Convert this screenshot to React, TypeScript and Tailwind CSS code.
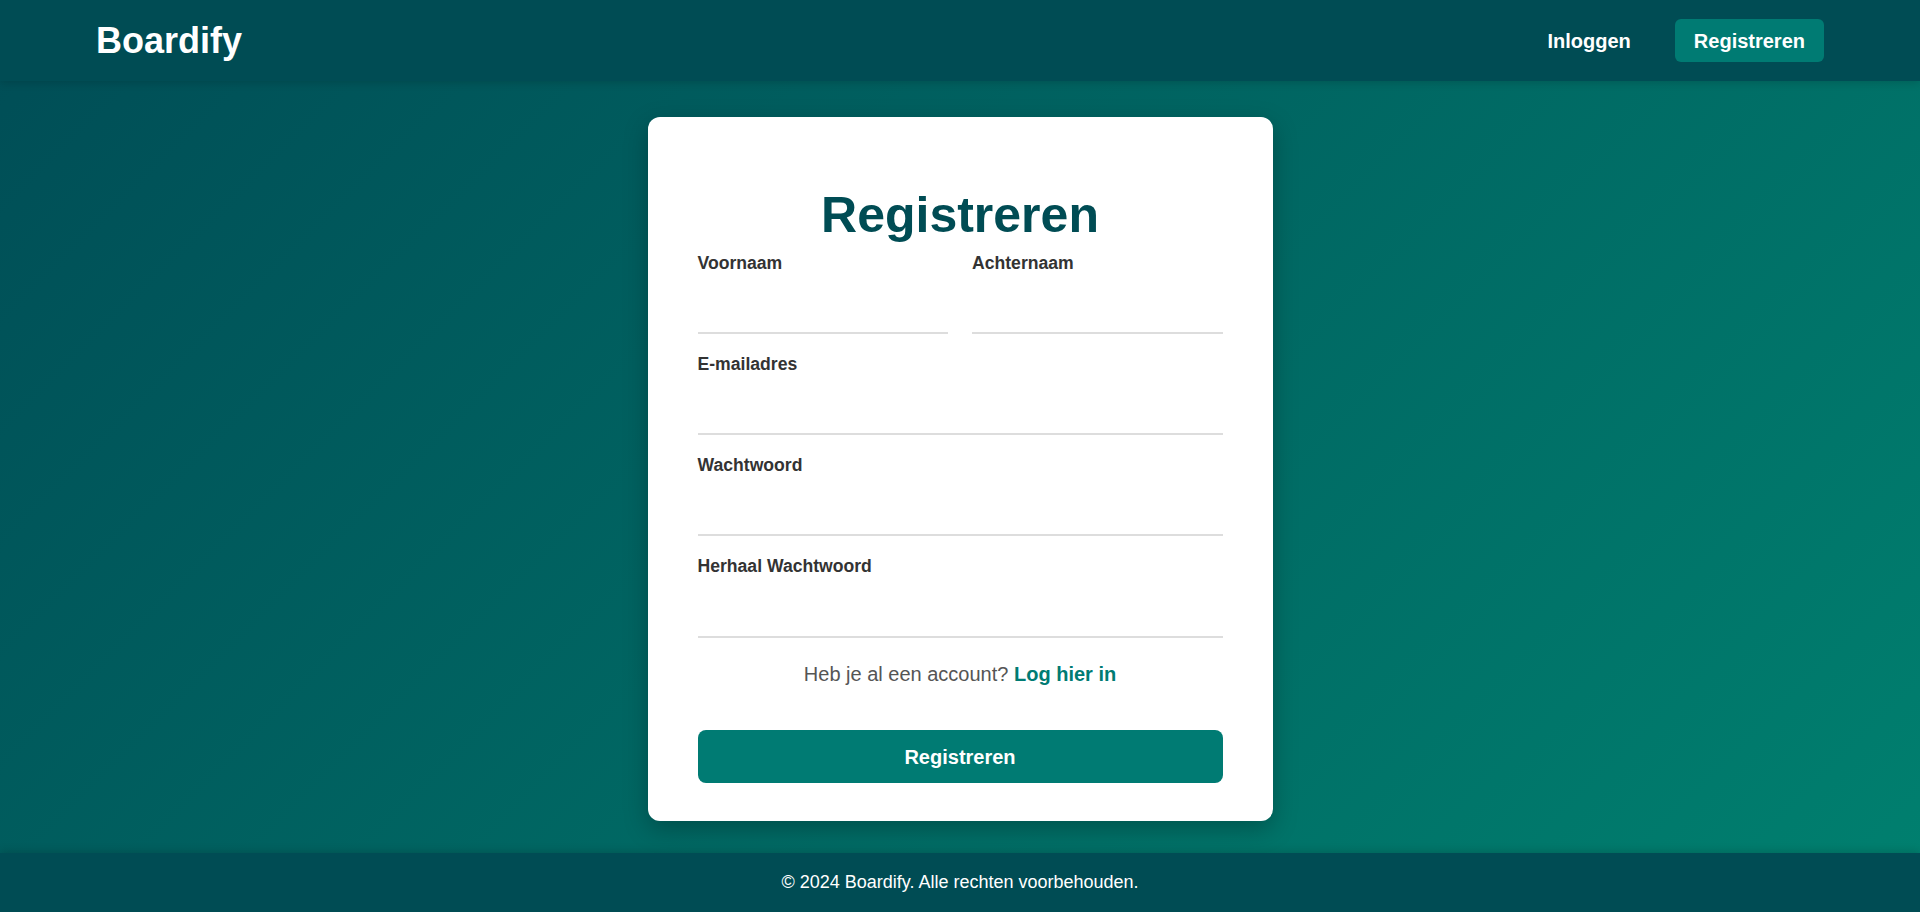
import React from "react";

const font = { fontFamily: '"Liberation Sans", Arial, sans-serif' };

function Field({ label }: { label: string }) {
  return (
    <div className="mb-[20px] flex flex-col">
      <label className="text-[17.6px] leading-[20px] font-bold text-[#333333]">{label}</label>
      <div className="h-[61px] border-b-2 border-[#dddddd]" />
    </div>
  );
}

export default function App() {
  return (
    <div
      className="flex min-h-[912px] flex-col bg-[linear-gradient(135deg,#004d56_0%,#00806f_100%)]"
      style={font}
    >
      <header className="relative z-10 flex h-[81px] items-center justify-between bg-[#004c54] px-[96px] shadow-[0_2px_8px_rgba(0,0,0,0.15)]">
        <div className="text-[36px] font-bold leading-none text-white">Boardify</div>
        <nav className="flex items-center gap-[44px]">
          <a className="text-[20px] font-bold text-white">Inloggen</a>
          <a className="flex h-[43px] items-center rounded-[6px] bg-[#007b73] px-[19px] text-[20px] font-bold text-white">
            Registreren
          </a>
        </nav>
      </header>

      <main className="flex flex-1 items-center justify-center pt-[4px]">
        <div className="w-[625px] rounded-[12px] bg-white px-[50px] pt-[70px] pb-[38px] shadow-[0_8px_24px_rgba(0,0,0,0.25)]">
          <h1 className="text-center text-[50px] leading-[57px] font-bold text-[#004c54]">Registreren</h1>
          <div className="mt-[9px] grid grid-cols-2 gap-x-[24px]">
            <Field label="Voornaam" />
            <Field label="Achternaam" />
          </div>
          <Field label="E-mailadres" />
          <Field label="Wachtwoord" />
          <div className="flex flex-col">
            <label className="text-[17.6px] leading-[20px] font-bold text-[#333333]">Herhaal Wachtwoord</label>
            <div className="h-[62px] border-b-2 border-[#dddddd]" />
          </div>
          <p className="mt-[25px] text-center text-[20px] leading-[23px] text-[#555555]">
            Heb je al een account? <a className="font-bold text-[#007b73]">Log hier in</a>
          </p>
          <button className="mt-[44px] flex h-[53px] w-full items-center justify-center rounded-[8px] bg-[#007b73] text-[20px] font-bold text-white">
            Registreren
          </button>
        </div>
      </main>

      <footer className="relative z-10 flex h-[59px] items-center justify-center bg-[#004c54] shadow-[0_-2px_8px_rgba(0,0,0,0.15)]">
        <p className="text-[18px] text-white">© 2024 Boardify. Alle rechten voorbehouden.</p>
      </footer>
    </div>
  );
}
